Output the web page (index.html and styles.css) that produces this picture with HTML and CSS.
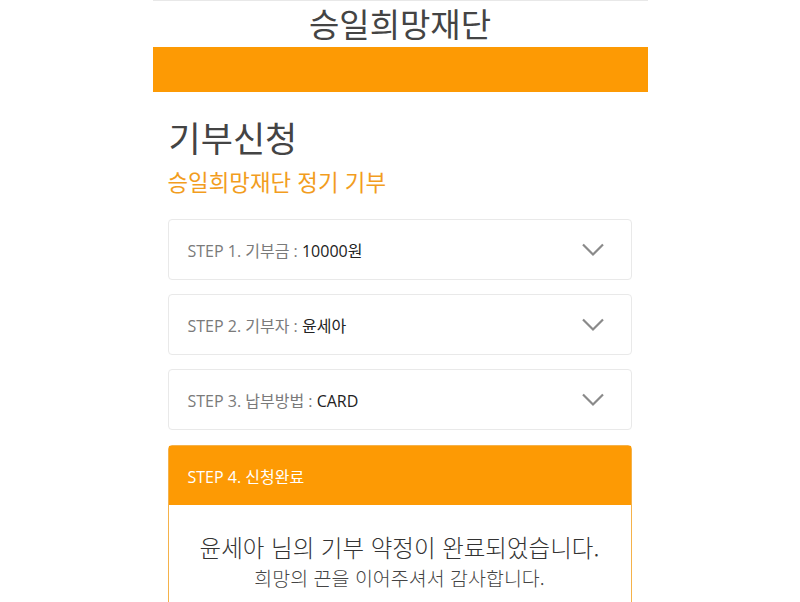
FILE: index.html
```html
<!DOCTYPE html>
<html lang="ko">
<head>
<meta charset="utf-8">
<title>기부신청</title>
<link rel="stylesheet" href="styles.css">
</head>
<body>
<div class="page">
  <header class="brand">승일희망재단</header>
  <div class="topbar"></div>
  <main class="main">
    <h1 class="title">기부신청</h1>
    <p class="subtitle">승일희망재단 정기 기부</p>
    <div class="steps">
      <div class="card">
        <span class="label">STEP 1. 기부금 : <span class="value">10000원</span></span>
        <svg class="chev" width="24" height="14" viewBox="0 0 24 14"><path d="M2 1.5 L12 11.5 L22 1.5" fill="none" stroke="#8a8a8a" stroke-width="2.2"/></svg>
      </div>
      <div class="card">
        <span class="label">STEP 2. 기부자 : <span class="value">윤세아</span></span>
        <svg class="chev" width="24" height="14" viewBox="0 0 24 14"><path d="M2 1.5 L12 11.5 L22 1.5" fill="none" stroke="#8a8a8a" stroke-width="2.2"/></svg>
      </div>
      <div class="card">
        <span class="label">STEP 3. 납부방법 : <span class="value">CARD</span></span>
        <svg class="chev" width="24" height="14" viewBox="0 0 24 14"><path d="M2 1.5 L12 11.5 L22 1.5" fill="none" stroke="#8a8a8a" stroke-width="2.2"/></svg>
      </div>
      <div class="card-active">
        <div class="active-head">STEP 4. 신청완료</div>
        <div class="active-body">
          <p class="done">윤세아 님의 기부 약정이 완료되었습니다.</p>
          <p class="thanks">희망의 끈을 이어주셔서 감사합니다.</p>
        </div>
      </div>
    </div>
  </main>
</div>
</body>
</html>
```
FILE: styles.css
```css
html, body {
  margin: 0;
  padding: 0;
  background: #ffffff;
}
body {
  font-family: "Noto Sans CJK KR", "Noto Sans", sans-serif;
  color: #444;
}
.page {
  width: 495px;
  margin: 0 auto;
  height: 602px;
  overflow: hidden;
}
.brand {
  height: 46px;
  border-top: 1px solid #e8e8e8;
  text-align: center;
  font-size: 33px;
  line-height: 44px;
  color: #444;
}
.topbar {
  height: 45px;
  background: #fd9a04;
}
.main {
  padding: 0 16px 0 15px;
}
.title {
  margin: 22px 0 0 1px;
  font-size: 35px;
  font-weight: 400;
  line-height: 46px;
  color: #444;
}
.subtitle {
  margin: 0;
  font-size: 22.4px;
  line-height: 42px;
  color: #f29d1e;
}
.steps {
  margin-top: 17px;
  display: flex;
  flex-direction: column;
  gap: 14px;
}
.card {
  height: 59px;
  border: 1px solid #e9e9e9;
  border-radius: 4px;
  display: flex;
  align-items: center;
  justify-content: space-between;
  padding: 0 26px 0 19px;
}
.label {
  font-family: "Open Sans", "Noto Sans CJK KR", sans-serif;
  font-size: 16px;
  color: #7a7a7a;
}
.value {
  color: #222;
}
.chev {
  display: block;
  margin-top: 1px;
}
.card-active {
  margin-top: 1px;
  border: 1px solid #f5b24a;
  border-radius: 4px 4px 0 0;
}
.active-head {
  height: 59px;
  background: #fd9a04;
  color: #fff;
  font-family: "Open Sans", "Noto Sans CJK KR", sans-serif;
  font-size: 16px;
  display: flex;
  align-items: center;
  padding-left: 19px;
}
.active-body {
  background: #fff;
  text-align: center;
  padding-top: 26px;
  height: 120px;
}
.done {
  margin: 0;
  font-size: 23.5px;
  line-height: 32px;
  font-weight: 300;
  color: #333;
}
.thanks {
  margin: 0;
  font-size: 19.5px;
  line-height: 30px;
  font-weight: 300;
  color: #444;
}
```
